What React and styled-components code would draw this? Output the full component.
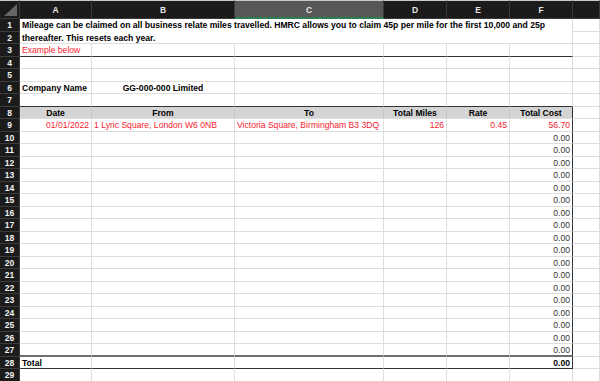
import React from 'react'
import styled, { createGlobalStyle, css } from 'styled-components'

const GlobalStyle = createGlobalStyle`
  html, body {
    margin: 0;
    padding: 0;
    background: #fff;
  }
  body {
    font-family: "Liberation Sans", Arial, sans-serif;
    overflow: hidden;
  }
`

const COLUMNS = ['A', 'B', 'C', 'D', 'E', 'F', '']
const ACTIVE_COL = 'C'

const Sheet = styled.div`
  display: grid;
  grid-template-columns: 20px 72px 143px 149px 63px 63px 63px 1fr;
  grid-template-rows: 19px repeat(29, 12.5px);
  width: 600px;
  height: 381px;
  overflow: hidden;
  font-size: 8.5px;
`

const Corner = styled.div`
  position: relative;
  background: #1b1b1b;
  border-top: 1px solid #c9c9c9;
  border-right: 1px solid #3a3a3a;
  border-bottom: 1px solid #3a3a3a;
  box-sizing: border-box;
  &::after {
    content: '';
    position: absolute;
    right: 2px;
    bottom: 2px;
    width: 0;
    height: 0;
    border-left: 13px solid transparent;
    border-bottom: 12px solid #666;
  }
`

const ColHeader = styled.div`
  box-sizing: border-box;
  display: flex;
  align-items: center;
  justify-content: center;
  background: ${p => (p.$active ? '#575757' : '#1b1b1b')};
  color: #e6e6e6;
  font-weight: bold;
  border-top: 1px solid #c9c9c9;
  border-right: 1px solid #3a3a3a;
  border-bottom: ${p => (p.$active ? '2px solid #2e7d4e' : '1px solid #3a3a3a')};
  padding-top: ${p => (p.$active ? '1px' : '0')};
`

const RowHeader = styled.div`
  box-sizing: border-box;
  background: #1b1b1b;
  color: #f2f2f2;
  font-weight: bold;
  text-align: center;
  line-height: 12px;
  border-bottom: 1px solid #3c3c3c;
  border-right: 1px solid #3a3a3a;
`

const borderColors = {
  light: '1px solid #dedede',
  dark: '1px solid #333',
  double: '2px solid #6e6e6e',
  shade: '1px solid #c6c6c6',
}

const Cell = styled.div`
  box-sizing: border-box;
  padding: 0 2px;
  line-height: 12px;
  font-size: 8.6px;
  white-space: nowrap;
  overflow: visible;
  text-align: ${p => p.$align || 'left'};
  font-weight: ${p => (p.$bold ? 'bold' : 'normal')};
  color: ${p => (p.$red ? '#f5222d' : p.$muted ? '#333' : '#000')};
  background: ${p => (p.$shade ? '#d4d4d4' : 'transparent')};
  border-right: ${p => borderColors[p.$br || 'light']};
  border-bottom: ${p => borderColors[p.$bb || 'light']};
  ${p =>
    p.$wrap &&
    css`
      grid-column: 2 / span 6;
      grid-row: 2 / span 2;
      white-space: normal;
      line-height: 12.5px;
    `}
`

const intro =
  'Mileage can be claimed on all business relate miles travelled. HMRC allows you to claim 45p per mile for the first 10,000 and 25p thereafter. This resets each year.'

const headings = ['Date', 'From', 'To', 'Total Miles', 'Rate', 'Total Cost']
const example = [
  { text: '01/01/2022', align: 'right' },
  { text: '1 Lyric Square, London W6 0NB' },
  { text: 'Victoria Square, Birmingham B3 3DQ' },
  { text: '126', align: 'right' },
  { text: '0.45', align: 'right' },
  { text: '56.70', align: 'right' },
]

// builds the cell props for one sheet row (A..G)
function rowCells(r) {
  const list = COLUMNS.map(() => ({}))
  const inTable = r >= 8 && r <= 28

  if (r === 3) list[0] = { text: 'Example below', red: true }
  if (r === 6) {
    list[0] = { text: 'Company Name', bold: true }
    list[1] = { text: 'GG-000-000 Limited', bold: true, align: 'center' }
  }
  if (r === 8) {
    headings.forEach((h, i) => {
      list[i] = { text: h, bold: true, align: 'center', shade: true, br: 'shade' }
    })
  }
  if (r === 9) example.forEach((c, i) => (list[i] = { ...c, red: true }))
  if (r >= 10 && r <= 27) list[5] = { text: '0.00', align: 'right', muted: true }
  if (r === 28) {
    list[0] = { text: 'Total', bold: true }
    list[5] = { text: '0.00', align: 'right', bold: true }
  }

  for (let i = 0; i < 6; i++) {
    if (r === 3 || r === 7 || r === 28) list[i].bb = 'dark'
    if (r === 27) list[i].bb = 'double'
  }
  if (inTable) list[5].br = 'dark'
  return list
}

export default function App() {
  const rows = Array.from({ length: 29 }, (_, i) => i + 1)

  return (
    <>
      <GlobalStyle />
      <Sheet>
        <Corner />
        {COLUMNS.map((c, i) => (
          <ColHeader key={i} $active={c === ACTIVE_COL}>
            {c}
          </ColHeader>
        ))}

        {rows.map(r => (
          <React.Fragment key={r}>
            <RowHeader style={{ gridRow: r + 1, gridColumn: 1 }}>{r}</RowHeader>
            {r === 1 && (
              <Cell $wrap $bold>
                {intro}
              </Cell>
            )}
            {r <= 2 ? (
              <Cell style={{ gridRow: r + 1, gridColumn: 8 }} />
            ) : (
              rowCells(r).map((c, i) => (
                <Cell
                  key={i}
                  $align={c.align}
                  $bold={c.bold}
                  $red={c.red}
                  $muted={c.muted}
                  $shade={c.shade}
                  $br={c.br}
                  $bb={c.bb}
                >
                  {c.text}
                </Cell>
              ))
            )}
          </React.Fragment>
        ))}
      </Sheet>
    </>
  )
}
